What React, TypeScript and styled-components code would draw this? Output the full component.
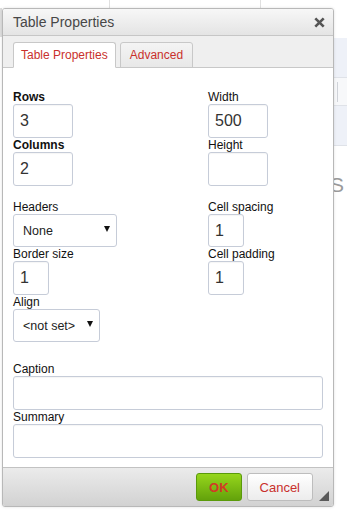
import React from "react";
import styled, { createGlobalStyle } from "styled-components";

const GlobalStyle = createGlobalStyle`
  html, body {
    margin: 0;
    padding: 0;
    background: #ffffff;
    font-family: "Liberation Sans", Arial, sans-serif;
  }
`;

const Page = styled.div`
  position: relative;
  width: 347px;
  height: 517px;
  overflow: hidden;
  background: #ffffff;
`;

/* page behind the dialog */
const TopGrid = styled.div`
  display: flex;
  height: 8px;
`;

const GridCell = styled.div<{ $w: number }>`
  width: ${(p) => p.$w}px;
  height: 100%;
  border-right: 1px solid #e0e0e0;
  box-sizing: border-box;
`;

const BodyRow = styled.div`
  display: flex;
  justify-content: space-between;
`;

const Gutter = styled.div`
  width: 2px;
  display: flex;
  flex-direction: column;
`;

const GutterBar = styled.div`
  height: 29px;
  background: #dedede;
`;

const Rail = styled.div`
  width: 14px;
  padding-top: 30px;
  display: flex;
  flex-direction: column;
`;

const RailBox = styled.div<{ $h: number; $plain?: boolean }>`
  height: ${(p) => p.$h}px;
  background: ${(p) => (p.$plain ? "#f7f8fa" : "#eef1f8")};
  border-bottom: 1px solid #dfe2e8;
  box-sizing: border-box;
  display: flex;
  align-items: center;
  padding-left: 4px;
`;

const RailMark = styled.div`
  width: 1px;
  height: 20px;
  background: #cfd2d8;
`;

const RailText = styled.div`
  margin: 28px 0 0 -3px;
  font-size: 21px;
  line-height: 22px;
  color: #9a9a9a;
`;

/* dialog */
const Dialog = styled.div`
  position: absolute;
  left: 2px;
  top: 8px;
  width: 332px;
  height: 499px;
  box-sizing: border-box;
  border: 1px solid #b8b8b8;
  border-radius: 3px;
  background: #ffffff;
  display: flex;
  flex-direction: column;
  overflow: hidden;
  box-shadow: 0 0 3px rgba(0, 0, 0, 0.12);
`;

const TitleBar = styled.div`
  flex-shrink: 0;
  height: 27px;
  box-sizing: border-box;
  display: flex;
  align-items: center;
  justify-content: space-between;
  padding: 0 8px 0 10px;
  background: linear-gradient(#f7f7f7, #e4e4e4);
  border-bottom: 1px solid #c6c6c6;
  font-size: 14px;
  line-height: 26px;
  color: #474747;
`;

const CloseButton = styled.span`
  display: flex;
  width: 11px;
  height: 11px;
  cursor: pointer;
`;

const TabStrip = styled.div`
  flex-shrink: 0;
  height: 32px;
  box-sizing: border-box;
  display: flex;
  align-items: flex-end;
  gap: 4px;
  padding: 6px 0 0 10px;
  background: #efefef;
  border-bottom: 1px solid #c8c8c8;
`;

const Tab = styled.div<{ $active?: boolean }>`
  height: 26px;
  box-sizing: border-box;
  margin-bottom: -1px;
  padding: 0 ${(p) => (p.$active ? 7 : 9)}px;
  font-size: 12px;
  line-height: 24px;
  color: #c9302c;
  border: 1px solid #c8c8c8;
  border-bottom-color: ${(p) => (p.$active ? "#ffffff" : "#c8c8c8")};
  border-radius: 3px 3px 0 0;
  background: ${(p) => (p.$active ? "#ffffff" : "linear-gradient(#f4f4f4, #e8e8e8)")};
`;

const Panel = styled.div`
  flex: 1;
  display: flex;
  flex-direction: column;
  padding: 22px 10px 0 10px;
  background: #ffffff;
`;

const Section = styled.div<{ $gap: number }>`
  display: grid;
  grid-template-columns: 195px 1fr;
  margin-bottom: ${(p) => p.$gap}px;
`;

const Column = styled.div`
  display: flex;
  flex-direction: column;
`;

const Field = styled.div`
  display: flex;
  flex-direction: column;
`;

const Label = styled.label<{ $bold?: boolean }>`
  font-size: 12px;
  line-height: 14px;
  color: #111;
  font-weight: ${(p) => (p.$bold ? "bold" : "normal")};
`;

const TextInput = styled.input<{ $w?: number; $h?: number }>`
  display: block;
  width: ${(p) => (p.$w ? `${p.$w}px` : "100%")};
  height: ${(p) => p.$h ?? 34}px;
  box-sizing: border-box;
  margin: 0;
  padding: 0 6px;
  border: 1px solid #c6ccd8;
  border-radius: 3px;
  box-shadow: inset 0 1px 1px rgba(0, 0, 0, 0.04);
  background: #ffffff;
  font-family: "Liberation Sans", Arial, sans-serif;
  font-size: 16px;
  color: #333;
  outline: none;
`;

const SelectBox = styled.div<{ $w: number }>`
  width: ${(p) => p.$w}px;
  height: 33px;
  box-sizing: border-box;
  display: flex;
  align-items: center;
  justify-content: space-between;
  padding: 0 6px 0 9px;
  border: 1px solid #c6ccd8;
  border-radius: 3px;
  background: #ffffff;
  font-size: 12.5px;
  color: #222;
`;

const Arrow = styled.span`
  width: 0;
  height: 0;
  border-left: 3.5px solid transparent;
  border-right: 3.5px solid transparent;
  border-top: 6px solid #111;
  margin-top: -3px;
`;

const Footer = styled.div`
  position: relative;
  flex-shrink: 0;
  height: 39px;
  box-sizing: border-box;
  display: flex;
  justify-content: flex-end;
  align-items: flex-start;
  gap: 5px;
  padding: 5px 20px 0 0;
  border-top: 1px solid #c2c2c2;
  background: linear-gradient(#ebebeb, #d2d2d2);
`;

const Button = styled.button<{ $primary?: boolean }>`
  height: 28px;
  box-sizing: border-box;
  padding: 0 12px;
  border-radius: 3px;
  font-family: "Liberation Sans", Arial, sans-serif;
  font-size: 13px;
  cursor: pointer;
  font-weight: ${(p) => (p.$primary ? "bold" : "normal")};
  color: ${(p) => (p.$primary ? "#d23a26" : "#c9302c")};
  border: 1px solid ${(p) => (p.$primary ? "#5a9a0a" : "#bdbdbd")};
  background: ${(p) =>
    p.$primary
      ? "linear-gradient(#96d61c, #63a20b)"
      : "linear-gradient(#ffffff, #ececec)"};
`;

const ResizeGrip = styled.span`
  position: absolute;
  right: 4px;
  bottom: 5px;
  width: 0;
  height: 0;
  border-left: 10px solid transparent;
  border-bottom: 10px solid #5a5a5a;
`;

function Input({ w, h, value }: { w?: number; h?: number; value?: string }) {
  return <TextInput $w={w} $h={h} value={value ?? ""} readOnly />;
}

export default function App() {
  return (
    <Page>
      <GlobalStyle />
      <TopGrid>
        <GridCell $w={110} />
        <GridCell $w={151} />
      </TopGrid>
      <BodyRow>
        <Gutter>
          <GutterBar />
        </Gutter>
        <Rail>
          <RailBox $h={40} />
          <RailBox $h={28} $plain>
            <RailMark />
          </RailBox>
          <RailBox $h={40} />
          <RailText>S</RailText>
        </Rail>
      </BodyRow>

      <Dialog>
        <TitleBar>
          <span>Table Properties</span>
          <CloseButton>
            <svg width="11" height="11" viewBox="0 0 11 11">
              <path
                d="M1.3 1.3 L9.7 9.7 M9.7 1.3 L1.3 9.7"
                stroke="#555"
                strokeWidth="2.6"
                fill="none"
              />
            </svg>
          </CloseButton>
        </TitleBar>

        <TabStrip>
          <Tab $active>Table Properties</Tab>
          <Tab>Advanced</Tab>
        </TabStrip>

        <Panel>
          <Section $gap={14}>
            <Column>
              <Field>
                <Label $bold>Rows</Label>
                <Input w={60} value="3" />
              </Field>
              <Field>
                <Label $bold>Columns</Label>
                <Input w={60} value="2" />
              </Field>
            </Column>
            <Column>
              <Field>
                <Label>Width</Label>
                <Input w={60} value="500" />
              </Field>
              <Field>
                <Label>Height</Label>
                <Input w={60} />
              </Field>
            </Column>
          </Section>

          <Section $gap={20}>
            <Column>
              <Field>
                <Label>Headers</Label>
                <SelectBox $w={104}>
                  <span>None</span>
                  <Arrow />
                </SelectBox>
              </Field>
              <Field>
                <Label>Border size</Label>
                <Input w={36} value="1" />
              </Field>
              <Field>
                <Label>Align</Label>
                <SelectBox $w={87}>
                  <span>&lt;not set&gt;</span>
                  <Arrow />
                </SelectBox>
              </Field>
            </Column>
            <Column>
              <Field>
                <Label>Cell spacing</Label>
                <Input w={36} h={33} value="1" />
              </Field>
              <Field>
                <Label>Cell padding</Label>
                <Input w={36} value="1" />
              </Field>
            </Column>
          </Section>

          <Field>
            <Label>Caption</Label>
            <Input />
          </Field>
          <Field>
            <Label>Summary</Label>
            <Input />
          </Field>
        </Panel>

        <Footer>
          <Button $primary>OK</Button>
          <Button>Cancel</Button>
          <ResizeGrip />
        </Footer>
      </Dialog>
    </Page>
  );
}
